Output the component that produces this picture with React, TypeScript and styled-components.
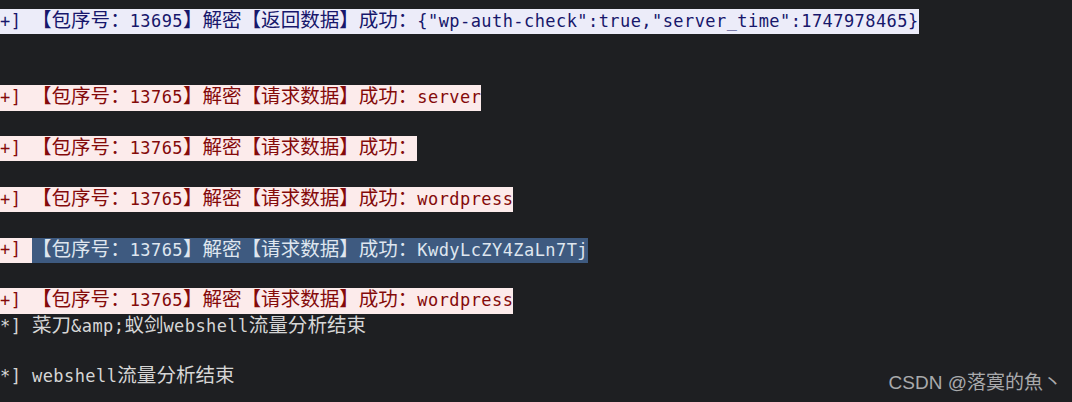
import React from "react";
import styled, { createGlobalStyle, css } from "styled-components";

const Global = createGlobalStyle`
  html, body {
    margin: 0;
    padding: 0;
    background: #1e1f22;
  }
  #root {
    width: 1072px;
    height: 402px;
    overflow: hidden;
  }
`;

const Screen = styled.div`
  position: relative;
  width: 1072px;
  height: 402px;
  background: #1e1f22;
  overflow: hidden;
`;

const Console = styled.div`
  display: flex;
  flex-direction: column;
  padding-top: 9px;
  font-family: "DejaVu Sans Mono", "Liberation Mono", monospace;
  font-size: 17px;
  letter-spacing: 0.43px;
  color: #d4d4d4;
`;

const Line = styled.div`
  height: 25.4px;
  white-space: pre;
  display: flex;
  align-items: stretch;
`;

type Tone = "info" | "req" | "sel" | "plain";

const tones: Record<Tone, ReturnType<typeof css>> = {
  info: css`
    background: #ececf9;
    color: #17176b;
  `,
  req: css`
    background: #fcebeb;
    color: #840a0a;
  `,
  sel: css`
    background: #3e5a80;
    color: #dfe6ef;
  `,
  plain: css`
    background: transparent;
    color: #d6d6d6;
  `,
};

const Mark = styled.span<{ $tone: Tone }>`
  display: inline-block;
  height: 25.4px;
  line-height: 22px;
  ${(p) => tones[p.$tone]}
`;

const Cjk = styled.span`
  font-family: "Noto Sans CJK SC", "Noto Sans CJK JP", sans-serif;
  font-size: 19.55px;
  line-height: 1;
  letter-spacing: 0;
`;

const Watermark = styled.div`
  position: absolute;
  right: 10px;
  top: 371px;
  font-family: "Liberation Sans", "Noto Sans CJK SC", sans-serif;
  font-size: 19px;
  line-height: 24px;
  color: #a9aaac;
  white-space: pre;
`;

const CJK_RE = /([\u3000-\u303f\u4e00-\u9fff\uff00-\uffef]+)/;

function Runs({ text }: { text: string }) {
  const parts = text.split(CJK_RE).filter((p) => p.length > 0);
  return (
    <>
      {parts.map((p, i) =>
        CJK_RE.test(p) ? <Cjk key={i}>{p}</Cjk> : <React.Fragment key={i}>{p}</React.Fragment>
      )}
    </>
  );
}

const REQ = "+] 【包序号：13765】解密【请求数据】成功：";

export default function App() {
  return (
    <Screen>
      <Global />
      <Console>
        <Line>
          <Mark $tone="info">
            <Runs text={'+] 【包序号：13695】解密【返回数据】成功：{"wp-auth-check":true,"server_time":1747978465}'} />
          </Mark>
        </Line>
        <Line />
        <Line />
        <Line>
          <Mark $tone="req">
            <Runs text={REQ + "server"} />
          </Mark>
        </Line>
        <Line />
        <Line>
          <Mark $tone="req">
            <Runs text={REQ} />
          </Mark>
        </Line>
        <Line />
        <Line>
          <Mark $tone="req">
            <Runs text={REQ + "wordpress"} />
          </Mark>
        </Line>
        <Line />
        <Line>
          <Mark $tone="req">
            <Runs text={"+] "} />
          </Mark>
          <Mark $tone="sel">
            <Runs text={"【包序号：13765】解密【请求数据】成功：KwdyLcZY4ZaLn7Tj"} />
          </Mark>
        </Line>
        <Line />
        <Line>
          <Mark $tone="req">
            <Runs text={REQ + "wordpress"} />
          </Mark>
        </Line>
        <Line>
          <Mark $tone="plain">
            <Runs text={"*] 菜刀&amp;蚁剑webshell流量分析结束"} />
          </Mark>
        </Line>
        <Line />
        <Line>
          <Mark $tone="plain">
            <Runs text={"*] webshell流量分析结束"} />
          </Mark>
        </Line>
      </Console>
      <Watermark>CSDN @落寞的魚丶</Watermark>
    </Screen>
  );
}
